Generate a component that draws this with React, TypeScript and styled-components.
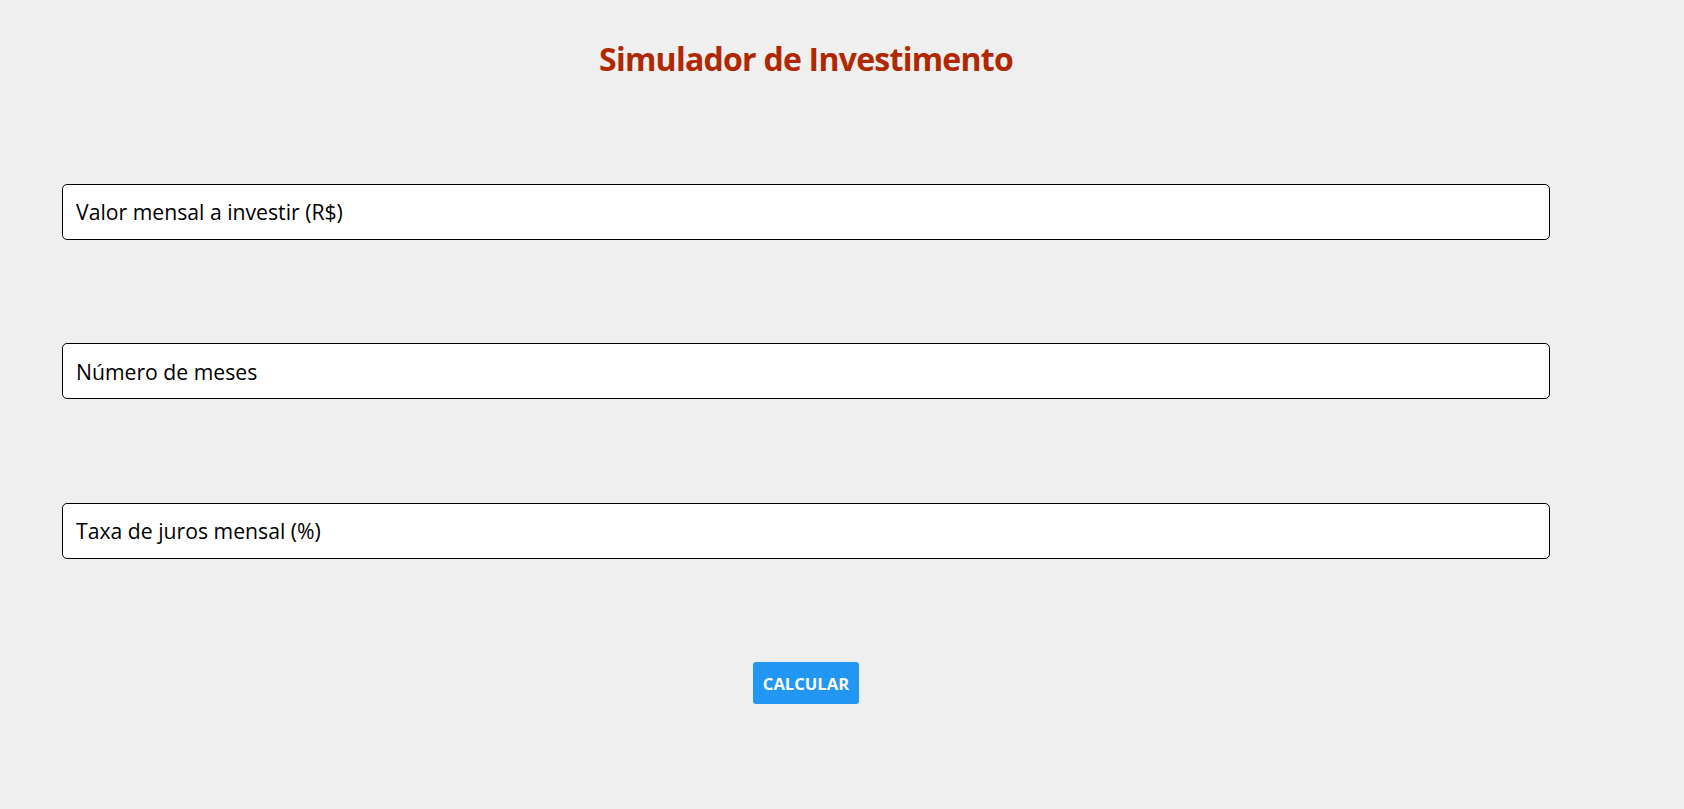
import React from 'react';
import styled, { createGlobalStyle } from 'styled-components';

const GlobalStyle = createGlobalStyle`
  html, body {
    margin: 0;
    padding: 0;
    background: #efefef;
  }
  body {
    font-family: "Open Sans", "Noto Sans", sans-serif;
  }
`;

const Page = styled.main`
  min-height: 100vh;
  padding: 37px 0 0 62px;
  box-sizing: border-box;
`;

const Form = styled.form`
  width: 1488px;
  display: flex;
  flex-direction: column;
  align-items: center;
  gap: 103.6px;
`;

const Title = styled.h1`
  margin: 0;
  height: 43px;
  font-size: 32px;
  line-height: 43px;
  letter-spacing: -0.75px;
  font-weight: 700;
  color: #b02800;
`;

const Field = styled.input`
  width: 100%;
  height: 56px;
  box-sizing: border-box;
  padding: 0 13px;
  border: 1px solid #000;
  border-radius: 5px;
  background: #fff;
  font-family: "Open Sans", "Noto Sans", sans-serif;
  font-size: 21.2px;
  color: #000;
  outline: none;

  &::placeholder {
    color: #000;
    opacity: 1;
  }
`;

const SubmitButton = styled.button`
  width: 106px;
  height: 42px;
  padding: 0;
  border: none;
  border-radius: 3px;
  background: #2196f3;
  color: #fff;
  font-family: "Open Sans", "Noto Sans", sans-serif;
  font-size: 16.6px;
  font-weight: 700;
  cursor: pointer;
`;

const fields = [
  'Valor mensal a investir (R$)',
  'Número de meses',
  'Taxa de juros mensal (%)',
];

export default function App() {
  return (
    <>
      <GlobalStyle />
      <Page>
        <Form onSubmit={e => e.preventDefault()}>
          <Title>Simulador de Investimento</Title>
          {fields.map(label => (
            <Field key={label} type="text" placeholder={label} />
          ))}
          <SubmitButton type="submit">CALCULAR</SubmitButton>
        </Form>
      </Page>
    </>
  );
}
